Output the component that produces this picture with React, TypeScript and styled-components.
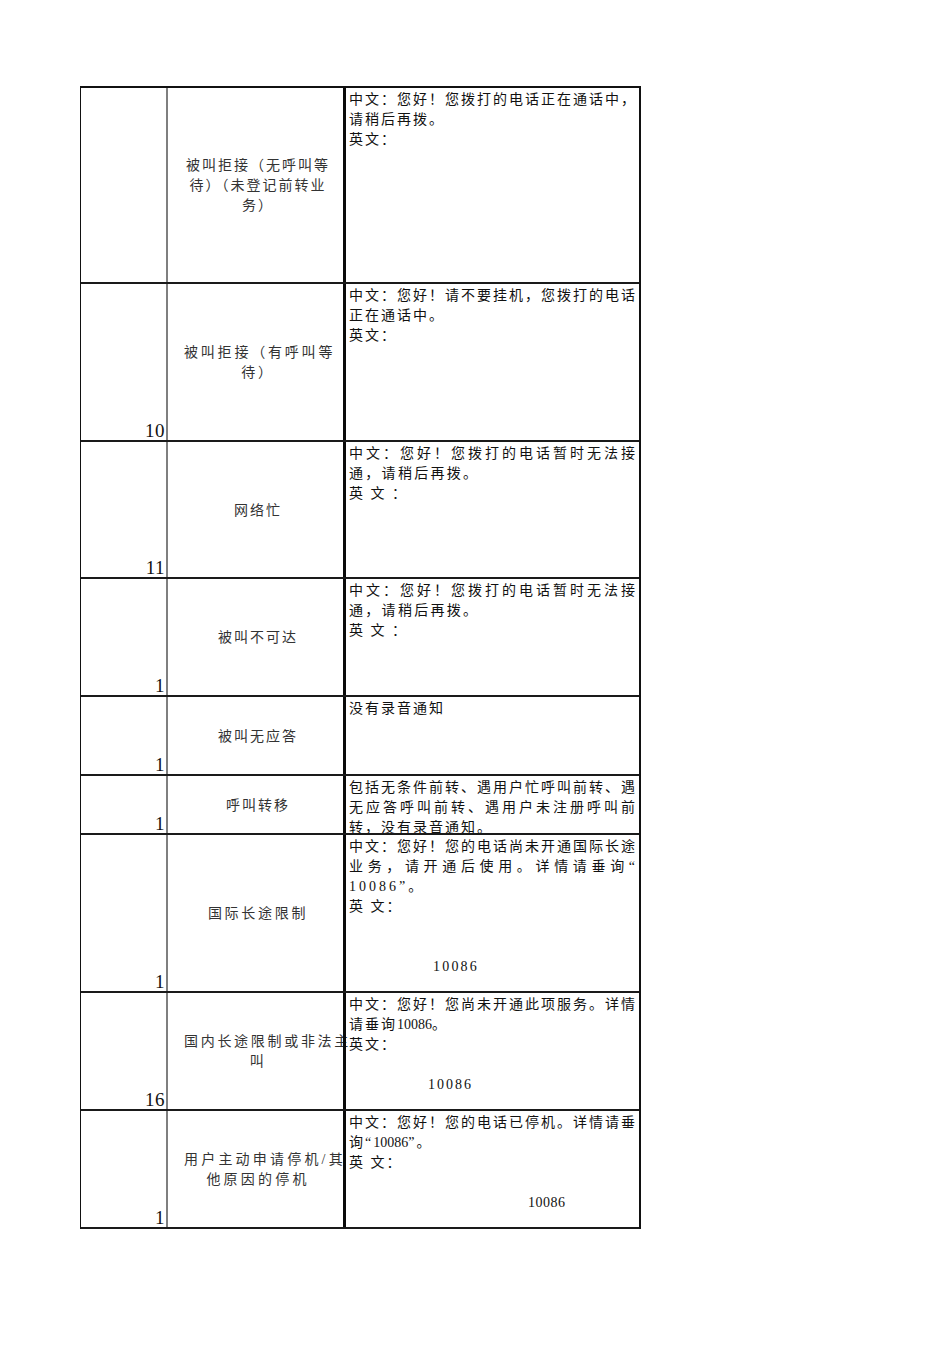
import React from "react";
import styled, { createGlobalStyle } from "styled-components";

const Global = createGlobalStyle`
  html, body { margin: 0; padding: 0; background: #ffffff; }
  body { font-family: "Liberation Serif", "Noto Sans CJK SC", serif; color: #111; }
`;

const Page = styled.div`
  width: 950px;
  min-height: 1345px;
  padding: 86px 0 0 80px;
  box-sizing: border-box;
`;

const Sheet = styled.div`
  width: 561px;
  box-sizing: border-box;
  border-top: 2px solid #111;
  border-left: 1px solid #111;
  border-right: 2px solid #111;
  display: flex;
  flex-direction: column;
`;

const Row = styled.div<{ $h: number }>`
  display: grid;
  grid-template-columns: 87px 175px 296px;
  height: ${(p) => p.$h}px;
  box-sizing: border-box;
  border-bottom: 2px solid #1a1a1a;
`;

const NumCell = styled.div`
  display: flex;
  align-items: flex-end;
  justify-content: flex-end;
  border-right: 2px solid #7f7f7f;
  padding-right: 1px;
  font-family: "Liberation Serif", serif;
  font-size: 19px;
  line-height: 18px;
  letter-spacing: 0.5px;
  color: #111;
`;

const LabelCell = styled.div`
  display: flex;
  flex-direction: column;
  justify-content: center;
  padding: 2px 11px 0 16px;
  min-width: 0;
`;

const LabelLine = styled.div<{ $ls: number }>`
  white-space: nowrap;
  text-align: center;
  font-size: 14px;
  line-height: 20px;
  letter-spacing: ${(p) => p.$ls}px;
  color: #333;
`;

const TextCell = styled.div`
  border-left: 3px solid #0a0a0a;
  padding: 2px 2px 0 3px;
  overflow: hidden;
  min-width: 0;
`;

const TextLine = styled.div<{ $justify?: boolean; $indent?: number; $ls?: number }>`
  font-size: 14px;
  line-height: 20px;
  height: 20px;
  letter-spacing: ${(p) => (p.$ls ?? 2)}px;
  padding-left: ${(p) => p.$indent ?? 0}px;
  white-space: ${(p) => (p.$justify ? "normal" : "nowrap")};
  text-align: ${(p) => (p.$justify ? "justify" : "left")};
  text-align-last: ${(p) => (p.$justify ? "justify" : "auto")};
  color: #111;
`;

const Digits = styled.span`
  letter-spacing: 0;
`;

type Line = { t: React.ReactNode; justify?: boolean; indent?: number; ls?: number };
type RowData = { h: number; num: string; label: string[]; ls: number; lines: Line[] };

const rows: RowData[] = [
  {
    h: 196,
    num: "",
    label: ["被叫拒接（无呼叫等", "待）（未登记前转业", "务）"],
    ls: 2,
    lines: [
      { t: "中文：您好！您拨打的电话正在通话中，", justify: true },
      { t: "请稍后再拨。" },
      { t: "英文：" },
    ],
  },
  {
    h: 158,
    num: "10",
    label: ["被叫拒接（有呼叫等", "待）"],
    ls: 2.8,
    lines: [
      { t: "中文：您好！请不要挂机，您拨打的电话", justify: true },
      { t: "正在通话中。" },
      { t: "英文：" },
    ],
  },
  {
    h: 137,
    num: "11",
    label: ["网络忙"],
    ls: 2,
    lines: [
      { t: "中文：您好！您拨打的电话暂时无法接", justify: true },
      { t: "通，请稍后再拨。", ls: 2.3 },
      { t: "英 文 ：" },
    ],
  },
  {
    h: 118,
    num: "1",
    label: ["被叫不可达"],
    ls: 2,
    lines: [
      { t: "中文：您好！您拨打的电话暂时无法接", justify: true },
      { t: "通，请稍后再拨。", ls: 2.3 },
      { t: "英 文 ：" },
    ],
  },
  {
    h: 79,
    num: "1",
    label: ["被叫无应答"],
    ls: 2,
    lines: [{ t: "没有录音通知" }],
  },
  {
    h: 59,
    num: "1",
    label: ["呼叫转移"],
    ls: 2,
    lines: [
      { t: "包括无条件前转、遇用户忙呼叫前转、遇", justify: true },
      { t: "无应答呼叫前转、遇用户未注册呼叫前", justify: true },
      { t: "转，没有录音通知。" },
    ],
  },
  {
    h: 158,
    num: "1",
    label: ["国际长途限制"],
    ls: 2.7,
    lines: [
      { t: "中文：您好！您的电话尚未开通国际长途", justify: true },
      { t: "业务，请开通后使用。详情请垂询“", justify: true },
      { t: "10086”。", ls: 3 },
      { t: "英 文：" },
      { t: "" },
      { t: "" },
      { t: "10086", indent: 84, ls: 2.2 },
    ],
  },
  {
    h: 118,
    num: "16",
    label: ["国内长途限制或非法主", "叫"],
    ls: 2.7,
    lines: [
      { t: "中文：您好！您尚未开通此项服务。详情", justify: true },
      { t: <>请垂询<Digits>10086</Digits>。</> },
      { t: "英文：" },
      { t: "" },
      { t: "10086", indent: 79, ls: 2 },
    ],
  },
  {
    h: 118,
    num: "1",
    label: ["用户主动申请停机/其", "他原因的停机"],
    ls: 3.2,
    lines: [
      { t: "中文：您好！您的电话已停机。详情请垂", justify: true },
      { t: <>询“<Digits>10086</Digits>”。</> },
      { t: "英 文：" },
      { t: "" },
      { t: "10086", indent: 179, ls: 0.5 },
    ],
  },
];

export default function App() {
  return (
    <>
      <Global />
      <Page>
        <Sheet>
          {rows.map((r, i) => (
            <Row key={i} $h={r.h}>
              <NumCell>{r.num}</NumCell>
              <LabelCell>
                {r.label.map((l, j) => (
                  <LabelLine key={j} $ls={r.ls}>
                    {l}
                  </LabelLine>
                ))}
              </LabelCell>
              <TextCell>
                {r.lines.map((l, j) => (
                  <TextLine key={j} $justify={l.justify} $indent={l.indent} $ls={l.ls}>
                    {l.t}
                  </TextLine>
                ))}
              </TextCell>
            </Row>
          ))}
        </Sheet>
      </Page>
    </>
  );
}
